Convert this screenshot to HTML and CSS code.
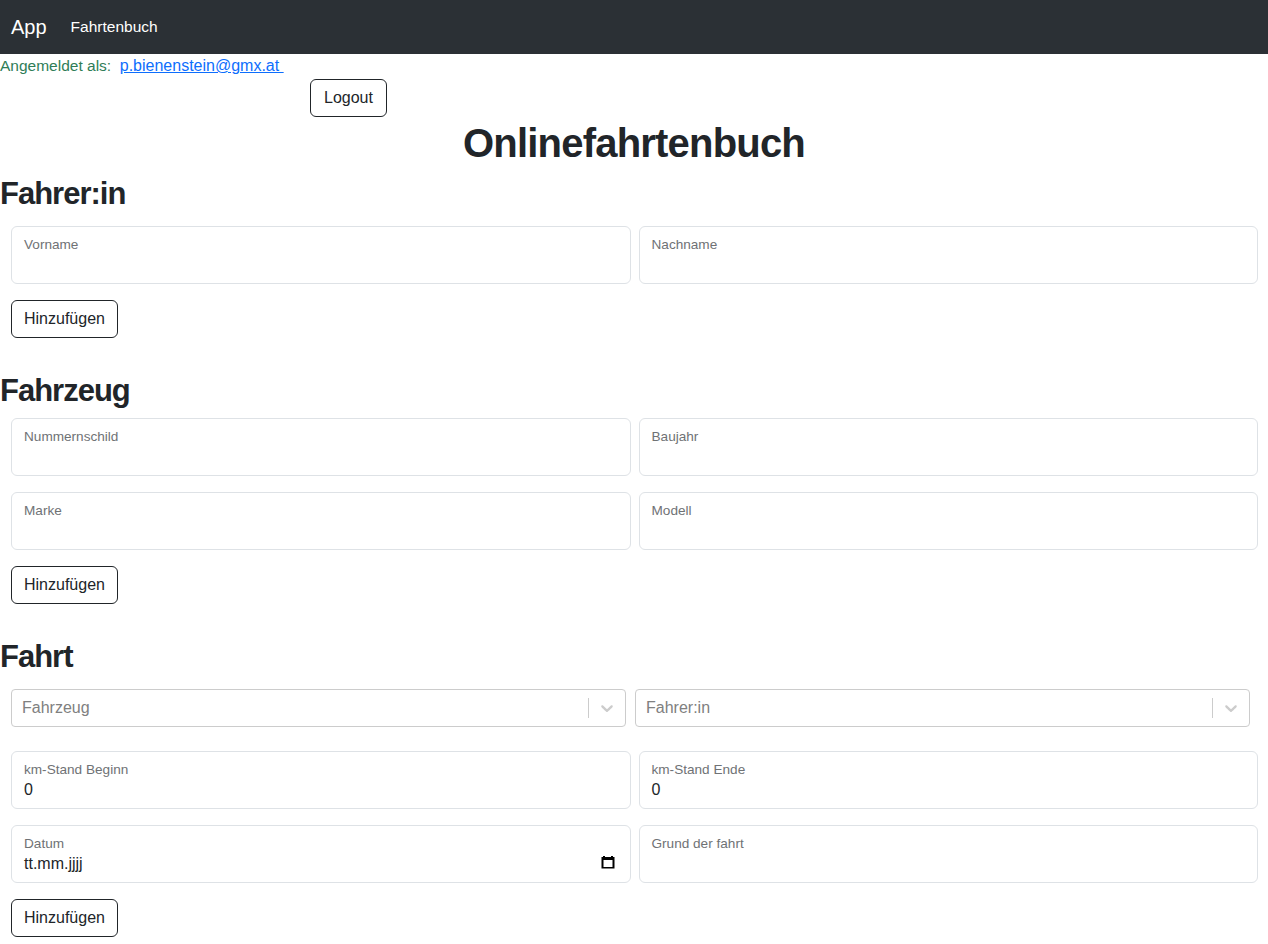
FILE: index.html
```html
<!DOCTYPE html>
<html lang="de">
<head>
<meta charset="utf-8">
<title>Onlinefahrtenbuch</title>
<link rel="stylesheet" href="styles.css">
</head>
<body>
<nav class="navbar">
  <span class="brand">App</span>
  <span class="nav-link">Fahrtenbuch</span>
</nav>
<div class="login">Angemeldet als: &nbsp;<a href="#" class="mail">p.bienenstein@gmx.at&nbsp;</a></div>
<div class="logout-row"><button class="btn">Logout</button></div>
<h1 class="title">Onlinefahrtenbuch</h1>

<section class="section first">
  <h2>Fahrer:in</h2>
  <div class="field-row">
    <div class="floating"><label>Vorname</label><div class="value"></div></div>
    <div class="floating"><label>Nachname</label><div class="value"></div></div>
  </div>
  <button class="btn">Hinzufügen</button>
</section>

<section class="section">
  <h2>Fahrzeug</h2>
  <div class="field-row">
    <div class="floating"><label>Nummernschild</label><div class="value"></div></div>
    <div class="floating"><label>Baujahr</label><div class="value"></div></div>
  </div>
  <div class="field-row">
    <div class="floating"><label>Marke</label><div class="value"></div></div>
    <div class="floating"><label>Modell</label><div class="value"></div></div>
  </div>
  <button class="btn">Hinzufügen</button>
</section>

<section class="section fahrt">
  <h2>Fahrt</h2>
  <div class="select-row">
    <div class="select">
      <span class="placeholder">Fahrzeug</span>
      <span class="sep"></span>
      <span class="indicator"><svg width="20" height="20" viewBox="0 0 20 20"><path fill="#cccccc" d="M4.516 7.548c0.436-0.446 1.043-0.481 1.576 0l3.908 3.747 3.908-3.747c0.533-0.481 1.141-0.446 1.574 0 0.436 0.445 0.408 1.197 0 1.615-0.406 0.418-4.695 4.502-4.695 4.502-0.217 0.223-0.502 0.335-0.787 0.335s-0.57-0.112-0.789-0.335c0 0-4.287-4.084-4.695-4.502s-0.436-1.17 0-1.615z"/></svg></span>
    </div>
    <div class="select">
      <span class="placeholder">Fahrer:in</span>
      <span class="sep"></span>
      <span class="indicator"><svg width="20" height="20" viewBox="0 0 20 20"><path fill="#cccccc" d="M4.516 7.548c0.436-0.446 1.043-0.481 1.576 0l3.908 3.747 3.908-3.747c0.533-0.481 1.141-0.446 1.574 0 0.436 0.445 0.408 1.197 0 1.615-0.406 0.418-4.695 4.502-4.695 4.502-0.217 0.223-0.502 0.335-0.787 0.335s-0.57-0.112-0.789-0.335c0 0-4.287-4.084-4.695-4.502s-0.436-1.17 0-1.615z"/></svg></span>
    </div>
  </div>
  <div class="field-row">
    <div class="floating"><label>km-Stand Beginn</label><div class="value">0</div></div>
    <div class="floating"><label>km-Stand Ende</label><div class="value">0</div></div>
  </div>
  <div class="field-row">
    <div class="floating date"><label>Datum</label><div class="value">tt.mm.jjjj</div>
      <svg class="cal" width="14" height="14" viewBox="0 0 14 14"><path fill="#000" d="M2 1h2v1h6V1h2v1h1.5v11.5h-13V2H2zM2.5 5v7h9V5z"/></svg>
    </div>
    <div class="floating"><label>Grund der fahrt</label><div class="value"></div></div>
  </div>
  <button class="btn">Hinzufügen</button>
</section>
</body>
</html>
```
FILE: styles.css
```css
* { box-sizing: border-box; }
body {
  margin: 0;
  font-family: "Liberation Sans", Arial, sans-serif;
  font-size: 16px;
  line-height: 1.5;
  color: #212529;
  background: #fff;
}
.navbar {
  height: 54px;
  background: #2b3035;
  display: flex;
  align-items: center;
  padding: 0 11px;
  color: #fff;
}
.brand { font-size: 20px; margin-right: 24px; }
.nav-link { font-size: 15.5px; color: #fff; }
.login {
  color: #2f7d57;
  line-height: 24px;
  font-size: 15.5px;
}
.mail { color: #0d6efd; text-decoration: underline; font-size: 16px; }
.logout-row { margin: 1px 0 0 310px; }
.btn {
  font-family: inherit;
  font-size: 16px;
  line-height: 24px;
  color: #212529;
  background: #fff;
  border: 1px solid #212529;
  border-radius: 6px;
  padding: 6px 12px;
  height: 38px;
  display: block;
}
.logout-row .btn { padding: 6px 13px; }
.section .btn { margin-left: 11px; }
.title {
  margin: 2px 0 8px;
  text-align: center;
  font-size: 40px;
  line-height: 48px;
  font-weight: 700;
  letter-spacing: -0.8px;
}
h2 {
  margin: 0 0 8px;
  font-size: 31px;
  line-height: 38px;
  font-weight: 700;
  letter-spacing: -1px;
}
.section { margin-bottom: 34px; }
.section.first h2 { margin-bottom: 13px; }
.field-row {
  display: grid;
  grid-template-columns: 1fr 1fr;
  column-gap: 8px;
  margin: 0 10px 16px 11px;
}
.floating {
  position: relative;
  height: 58px;
  border: 1px solid #dee2e6;
  border-radius: 6px;
  background: #fff;
}
.floating label {
  position: absolute;
  top: 8px;
  left: 12px;
  font-size: 13.6px;
  line-height: 20px;
  color: #6f7275;
}
.floating .value {
  padding: 26px 12px 0;
  line-height: 24px;
  font-size: 16px;
  color: #212529;
}
.floating .cal {
  position: absolute;
  right: 15px;
  top: 29px;
}
.fahrt h2 { margin-bottom: 13px; }
.select-row {
  display: grid;
  grid-template-columns: 1fr 1fr;
  column-gap: 9px;
  margin: 0 18px 24px 11px;
}
.select {
  height: 38px;
  border: 1px solid #cccccc;
  border-radius: 4px;
  display: flex;
  align-items: center;
  background: #fff;
}
.placeholder {
  flex: 1;
  padding: 2px 10px;
  color: #808080;
}
.sep {
  width: 1px;
  align-self: stretch;
  margin: 8px 0;
  background: #cccccc;
}
.indicator {
  display: flex;
  padding: 8px;
}
```
